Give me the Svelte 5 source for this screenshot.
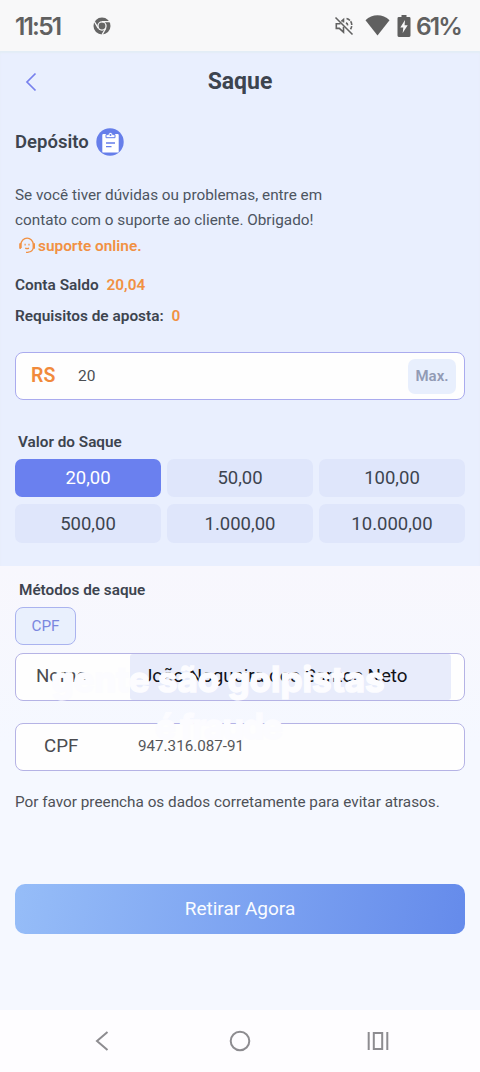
<script>
  const amounts = ['20,00', '50,00', '100,00', '500,00', '1.000,00', '10.000,00'];

  let selected = '20,00';
  let amount = '20';
  let fullName = 'João Nogueira dos Santos Neto';
  let cpf = '947.316.087-91';

  function pick(value) {
    selected = value;
    amount = value.replace('.', '').split(',')[0];
  }
</script>

<div class="screen">
  <div class="status-bar">
    <span class="clock">11:51</span>
    <svg class="chrome" width="18" height="18" viewBox="0 0 18 18">
      <circle cx="9" cy="9" r="8.5" fill="#656565" />
      <circle cx="9" cy="9" r="4.7" fill="#f7f7f8" />
      <circle cx="9" cy="9" r="3.4" fill="#656565" />
      <path d="M9 4.7h8M5.2 11.2L1.3 4.5M12.8 11.2L9 17.8" stroke="#f7f7f8" stroke-width="1.3" />
    </svg>
    <div class="status-right">
      <svg class="mute" width="20" height="20" viewBox="0 0 20 20" fill="none" stroke="#626262" stroke-width="1.6">
        <path d="M1.5 1.5l17 17" />
        <path d="M6.5 7.8H2.3v4.6h3l4.2 3.8v-5.4M7.4 5.4l2.1-1.8v3" />
        <path d="M12 6.8c1.1.6 1.6 1.5 1.7 2.6M12.5 2.5c5.2 1.3 6.6 6.7 4 10.8" stroke-dasharray="4 1" />
      </svg>
      <svg class="wifi" width="25" height="21" viewBox="0 0 25 21">
        <path d="M.5 5.2C7-1.3 18-1.3 24.5 5.2L12.5 20.5z" fill="#606060" />
      </svg>
      <svg class="battery" width="14" height="22" viewBox="0 0 14 22">
        <path d="M4.5 0h5v2h2.7Q13.5 2 13.5 3.4v17.2Q13.5 22 12.2 22H1.8Q.5 22 .5 20.6V3.4Q.5 2 1.8 2h2.7z" fill="#5f5f5f" />
        <path d="M8 5l-4.7 7.4h3L5.7 18l5-7.8H7.6z" fill="#f7f7f8" />
      </svg>
      <span class="percent">61%</span>
    </div>
  </div>

  <section class="top">
    <header>
      <svg class="back" width="12" height="20" viewBox="0 0 12 20" fill="none" stroke="#7780ed" stroke-width="1.7">
        <path d="M10.5 1.5L2 10l8.5 8.5" />
      </svg>
      <h1>Saque</h1>
    </header>

    <div class="deposit">
      <h2>Depósito</h2>
      <svg width="28" height="28" viewBox="0 0 28 28">
        <circle cx="14" cy="14" r="13.7" fill="#667eea" />
        <path d="M7.3 6h14.4q1 0 1 1v16.4q0 1.2-1 1.2H7.3q-1 0-1-1.2V7q0-1 1-1z" fill="#fff" />
        <path d="M10 9.700V6.600h2.300a2.200 2.200 0 0 1 4.400 0H19v3.100z" fill="#fff" stroke="#667eea" />
        <circle cx="14.5" cy="7" r="1" fill="#667eea" />
        <path d="M10 15h9M10 18.7h5.5" stroke="#667eea" stroke-width="1.3" />
      </svg>
    </div>

    <p class="help">
      Se você tiver dúvidas ou problemas, entre em<br />
      contato com o suporte ao cliente. Obrigado!
    </p>
    <div class="support">
      <svg width="18" height="17" viewBox="0 0 18 17" fill="none" stroke="#f19143">
        <path d="M3 11V7.3a6 6 0 0 1 12.2 0V11c-.5 2.6-2.5 4-5 4.1" stroke-width="1.3" />
        <path d="M2.2 7v4M16 7v4" stroke-width="2" stroke-linecap="round" />
        <path d="M7.1 6.8v1.6M11 6.8v1.6M7.2 11.1q1.9 1 3.8 0M8 15.4h2.5" stroke-width="1.2" />
      </svg>
      <b>suporte online.</b>
    </div>

    <div class="info">Conta Saldo <span>20,04</span></div>
    <div class="info">Requisitos de aposta: <span>0</span></div>

    <div class="amount-box">
      <span class="currency">RS</span>
      <input bind:value={amount} />
      <button class="max">Max.</button>
    </div>

    <h3>Valor do Saque</h3>
    <div class="grid">
      {#each amounts as value}
        <button class:active={selected === value} on:click={() => pick(value)}>{value}</button>
      {/each}
    </div>
  </section>

  <section class="bottom">
    <h3>Métodos de saque</h3>
    <button class="method">CPF</button>

    <div class="fields">
      <label class="field name">
        <span>Nome</span>
        <input bind:value={fullName} />
      </label>
      <label class="field cpf">
        <span>CPF</span>
        <input bind:value={cpf} />
      </label>
      <div class="caption">gente são golpistas<br /><span>é fraude</span></div>
    </div>

    <p class="note">Por favor preencha os dados corretamente para evitar atrasos.</p>
    <button class="submit">Retirar Agora</button>
  </section>

  <nav>
    <svg width="14" height="20" viewBox="0 0 14 20" fill="none" stroke="#8d8c90" stroke-width="2">
      <path d="M12.5 1L2 10l10.5 9" />
    </svg>
    <svg class="home" width="22" height="22" viewBox="0 0 22 22" fill="none" stroke="#8d8c90" stroke-width="2">
      <circle cx="11" cy="11" r="9.3" />
    </svg>
    <svg width="22" height="20" viewBox="0 0 22 20" fill="none" stroke="#8d8c90" stroke-width="2">
      <path d="M1.7 1v18M20.3 1v18M6.8 2h8.4v16H6.8z" />
    </svg>
  </nav>
</div>

<style>
  :global(body) {
    background: #fefdff;
  }

  .screen {
    width: 480px;
    height: 1072px;
    display: flex;
    flex-direction: column;
    overflow: hidden;
    font-family: Roboto, 'Liberation Sans', sans-serif;
    color: #3d444f;
  }

  h1, h2, h3, p {
    margin: 0;
  }

  button, input {
    font-family: inherit;
    border: 0;
    padding: 0;
    margin: 0;
    min-width: 0;
    color: inherit;
    outline: none;
    box-sizing: border-box;
  }

  svg {
    flex: none;
    display: block;
  }

  .status-bar {
    height: 51px;
    flex: none;
    display: flex;
    align-items: center;
    padding: 0 20px 0 15px;
    box-sizing: border-box;
    background: #f8f8f9;
    color: #606060;
    font-family: Inter, sans-serif;
    font-weight: 600;
    font-size: 24.5px;
  }

  .clock {
    width: 78px;
    letter-spacing: -1.8px;
  }

  .status-right {
    margin-left: auto;
    display: flex;
    align-items: center;
  }

  .wifi {
    margin-left: 11px;
  }

  .battery {
    margin: 0 5px 0 7px;
  }

  .percent {
    width: 44px;
    letter-spacing: -1.9px;
    white-space: nowrap;
  }

  .top {
    height: 515px;
    flex: none;
    box-sizing: border-box;
    padding: 0 15px;
    background: #e9effe;
    box-shadow: inset 0 2px 2px #e3edf6;
  }

  header {
    height: 61px;
    display: grid;
    grid-template-columns: 40px 1fr 40px;
    align-items: center;
  }

  .back {
    margin-left: 10px;
  }

  h1 {
    text-align: center;
    font-size: 23px;
    font-weight: 700;
  }

  .deposit {
    height: 60px;
    display: flex;
    align-items: center;
    gap: 7px;
  }

  h2 {
    font-size: 18.5px;
    font-weight: 600;
  }

  .help {
    margin-top: 11px;
    font-size: 15.3px;
    line-height: 25px;
    color: #4d5561;
    white-space: nowrap;
  }

  .support {
    height: 25px;
    display: flex;
    align-items: center;
    gap: 2px;
    padding-left: 3px;
    color: #f19143;
    font-size: 15.4px;
  }

  .support b {
    font-weight: 600;
  }

  .info {
    height: 31px;
    line-height: 31px;
    font-size: 15.4px;
    font-weight: 600;
  }

  .support + .info {
    margin-top: 12px;
  }

  .info span {
    color: #f19143;
    margin-left: 4px;
  }

  .amount-box {
    height: 48px;
    margin-top: 20px;
    padding: 0 8px 0 15px;
    display: flex;
    align-items: center;
    box-sizing: border-box;
    background: #fefefe;
    border: 1px solid #aaabee;
    border-radius: 8px;
  }

  .currency {
    width: 47px;
    padding-bottom: 2px;
    box-sizing: border-box;
    color: #f18a3b;
    font-size: 19.5px;
    font-weight: 600;
  }

  .amount-box input {
    flex: 1;
    font-size: 15.5px;
    background: transparent;
    color: #4b4e53;
  }

  .max {
    width: 48px;
    height: 35px;
    border-radius: 7px;
    background: #e8effd;
    color: #929bb5;
    font-size: 15px;
    font-weight: 600;
  }

  h3 {
    padding-left: 3px;
    font-size: 15.3px;
    line-height: 20px;
    font-weight: 600;
  }

  .top h3 {
    margin-top: 32px;
  }

  .grid {
    margin-top: 7px;
    display: grid;
    grid-template-columns: repeat(3, 1fr);
    grid-template-rows: 38px 39px;
    gap: 7px 6px;
  }

  .grid button {
    background: #dfe6fb;
    border-radius: 7px;
    font-size: 18.5px;
  }

  .grid .active {
    background: #6a80ef;
    color: #fff;
  }

  .bottom {
    height: 444px;
    flex: none;
    box-sizing: border-box;
    padding: 14px 15px 0;
    background: linear-gradient(#f8f7fd, #f5f8ff 40%);
  }

  .bottom h3 {
    padding-left: 4px;
  }

  .method {
    display: block;
    width: 61px;
    height: 38px;
    margin-top: 7px;
    background: #e9f0fd;
    border: 1px solid #aab3ef;
    border-radius: 8px;
    color: #7a87df;
    font-size: 15.3px;
  }

  .fields {
    position: relative;
    margin-top: 8px;
    display: flex;
    flex-direction: column;
    gap: 22px;
  }

  .field {
    height: 48px;
    display: flex;
    align-items: center;
    box-sizing: border-box;
    background: #fefefe;
    border: 1px solid #b5b3e5;
    border-radius: 8px;
    color: #4b4c50;
  }

  .field span {
    width: 114px;
    padding-bottom: 2px;
    box-sizing: border-box;
    font-size: 18.7px;
  }

  .name span {
    padding-left: 20px;
  }

  .cpf span {
    padding-left: 28px;
  }

  .field input {
    width: 321px;
    height: 100%;
    padding: 0 0 2px 12px;
    background: #e8ecfb;
    border-radius: 3px;
    color: #111217;
    font-size: 18.8px;
  }

  .cpf input {
    padding-left: 8px;
    background: transparent;
    color: #55565a;
    font-size: 15.2px;
  }

  /* subtitle that sits over both fields */
  .caption {
    position: absolute;
    top: 3px;
    left: 0;
    right: 0;
    padding-right: 44px;
    text-align: center;
    font-family: Inter, sans-serif;
    font-weight: 700;
    font-size: 35px;
    line-height: 47px;
    -webkit-text-stroke: 1.5px #fcfcff;
    color: #fcfcff;
    white-space: nowrap;
    pointer-events: none;
  }

  .caption span {
    letter-spacing: -2px;
  }

  .note {
    margin-top: 20px;
    font-size: 15.3px;
    line-height: 22px;
    color: #4e5157;
    white-space: nowrap;
  }

  .submit {
    display: block;
    width: 100%;
    height: 50px;
    margin-top: 71px;
    padding-bottom: 2px;
    border-radius: 10px;
    background: linear-gradient(100deg, #96bdf8, #658beb);
    color: #fafcff;
    font-size: 19px;
  }

  nav {
    flex: 1;
    display: flex;
    align-items: center;
    justify-content: space-between;
    padding: 0 91px 0 95px;
    background: #fefdff;
  }

  .home {
    margin-left: 4px;
  }
</style>
